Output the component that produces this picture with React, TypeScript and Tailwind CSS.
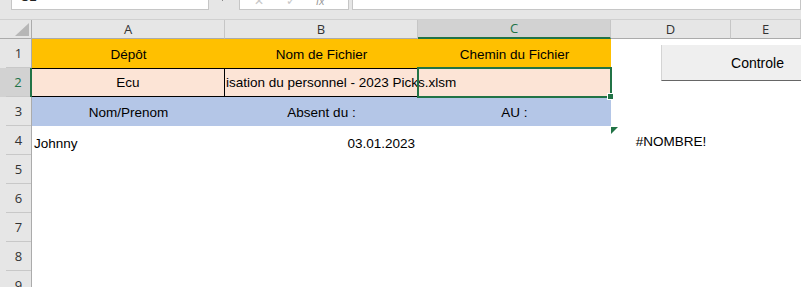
import React from "react";

const cols = ["A", "B", "C", "D", "E"];

function FormulaBar() {
  return (
    <div className="relative flex h-[20px] items-start bg-[#e6e6e6] border-b border-[#d0d0d0]">
      <div className="ml-[11px] h-[10px] w-[198px] overflow-hidden border border-t-0 border-[#c6c6c6] bg-white">
        <span className="mt-[-11px] block pl-[8px] text-[13px] leading-[16px] text-[#222]">C2</span>
      </div>
      <div className="ml-[13px] flex h-[3px] w-[2px] flex-col justify-between">
        <span className="h-[1px] w-[1px] bg-[#888]" />
      </div>
      <div className="ml-[15px] flex h-[10px] w-[110px] items-end overflow-hidden border border-t-0 border-[#c6c6c6] bg-white text-[#c8c8c8]">
        <span className="mb-[2px] ml-[14px] text-[12px] leading-[12px]">✕</span>
        <span className="mb-[2px] ml-[22px] text-[12px] leading-[12px]">✓</span>
        <span className="mb-[2px] ml-[20px] text-[11px] italic leading-[12px] text-[#999]">fx</span>
      </div>
      <div className="ml-[3px] h-[10px] flex-1 border border-t-0 border-[#c6c6c6] bg-white" />
    </div>
  );
}

function RowHead({ n, selected }: { n: number; selected?: boolean }) {
  return (
    <div
      className={
        selected
          ? "flex bg-[#d2d2d2] border-r-2 border-[#217346]"
          : "flex bg-[#e6e6e6] border-r border-[#ababab]"
      }
    >
      <div
        className={
          "ml-[6px] flex flex-1 items-center justify-center border-b border-[#c8c8c8] pt-[2px] font-['Open_Sans',sans-serif] text-[13px] " +
          (selected ? "text-[#217346]" : "text-[#333]")
        }
      >
        {n}
      </div>
    </div>
  );
}

function Sheet() {
  return (
    <div className="grid grid-cols-[32px_193px_193px_193px_120px_1fr] grid-rows-[19px_repeat(9,29px)]">
      {/* corner */}
      <div className="relative border-b border-r border-[#ababab] bg-[#e6e6e6]">
        <svg className="absolute left-[15px] top-[3px]" width="14" height="14" viewBox="0 0 14 14">
          <polygon points="14,0 14,13 0,13" fill="#b7b7b7" />
        </svg>
      </div>
      {cols.map((c) =>
        c === "C" ? (
          <div
            key={c}
            className="flex items-center justify-center border-b-2 border-r border-b-[#217346] border-r-[#c6c6c6] bg-[#d2d2d2] pt-[1px] font-['Open_Sans',sans-serif] text-[13px] text-[#217346]"
          >
            {c}
          </div>
        ) : (
          <div
            key={c}
            className="flex items-center justify-center border-b border-r border-b-[#ababab] border-r-[#c6c6c6] bg-[#e6e6e6] pt-[1px] font-['Open_Sans',sans-serif] text-[13px] text-[#333]"
          >
            {c}
          </div>
        )
      )}

      {/* row 1 */}
      <RowHead n={1} />
      <div className="flex items-center justify-center bg-[#ffc000] pt-[3px]">Dépôt</div>
      <div className="flex items-center justify-center bg-[#ffc000] pt-[3px]">Nom de Fichier</div>
      <div className="flex items-center justify-center bg-[#ffc000] pt-[3px]">Chemin du Fichier</div>
      <div />
      <div />

      {/* row 2 */}
      <RowHead n={2} selected />
      <div className="flex items-center justify-center border-y border-r border-black bg-[#fce4d6] pt-[2px]">Ecu</div>
      <div className="flex items-center border-y border-black bg-[#fce4d6] pt-[2px]">
        <span className="relative z-10 whitespace-nowrap pl-[1px]">isation du personnel - 2023 Picks.xlsm</span>
      </div>
      <div className="relative bg-[#fce4d6]">
        <div className="absolute -left-[1px] -top-[1px] z-20 h-[31px] w-[195px] border-2 border-[#217346]">
          <div className="absolute -bottom-[4px] -right-[4px] h-[7px] w-[7px] border border-white bg-[#217346]" />
        </div>
      </div>
      <div />
      <div />

      {/* row 3 */}
      <RowHead n={3} />
      <div className="flex items-center justify-center bg-[#b4c6e7] pt-[3px]">Nom/Prenom</div>
      <div className="flex items-center justify-center bg-[#b4c6e7] pt-[3px]">Absent du :</div>
      <div className="flex items-center justify-center bg-[#b4c6e7] pt-[3px]">AU :</div>
      <div />
      <div />

      {/* row 4 */}
      <RowHead n={4} />
      <div className="flex items-center pl-[2px] pt-[7px]">Johnny</div>
      <div className="flex items-center justify-end pr-[3px] pt-[7px]">03.01.2023</div>
      <div />
      <div className="relative flex items-center justify-center pt-[3px]">
        <svg className="absolute left-0 top-[1px]" width="7" height="7" viewBox="0 0 7 7">
          <polygon points="0,0 7,0 0,7" fill="#217346" />
        </svg>
        #NOMBRE!
      </div>
      <div />

      {[5, 6, 7, 8, 9].map((n) => (
        <React.Fragment key={n}>
          <RowHead n={n} />
          <div />
          <div />
          <div />
          <div />
          <div />
        </React.Fragment>
      ))}
    </div>
  );
}

export default function App() {
  return (
    <div className="relative h-[287px] w-[801px] overflow-hidden bg-white font-['Liberation_Sans',Arial,sans-serif] text-[13.5px] text-black">
      <FormulaBar />
      <Sheet />
      <button className="absolute left-[661px] top-[45px] h-[36px] w-[192px] border-b border-l border-[#d4d4d4] border-b-[#666] bg-[#efefef] pt-[1px] text-center text-[14px] text-black">
        Controle
      </button>
    </div>
  );
}
